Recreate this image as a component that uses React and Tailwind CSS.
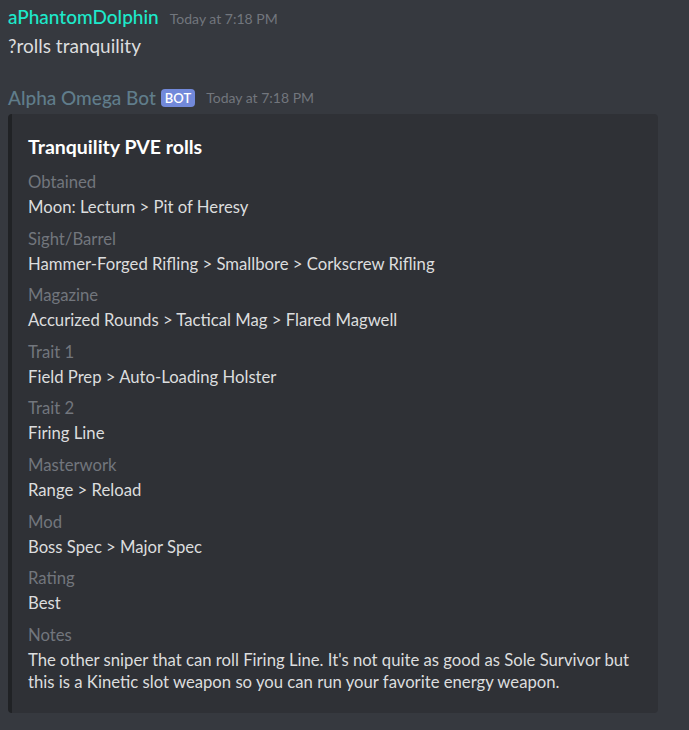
import React from "react";

const fields = [
  ["Obtained", "Moon: Lecturn > Pit of Heresy"],
  ["Sight/Barrel", "Hammer-Forged Rifling > Smallbore > Corkscrew Rifling"],
  ["Magazine", "Accurized Rounds > Tactical Mag > Flared Magwell"],
  ["Trait 1", "Field Prep > Auto-Loading Holster"],
  ["Trait 2", "Firing Line"],
  ["Masterwork", "Range > Reload"],
  ["Mod", "Boss Spec > Major Spec"],
  ["Rating", "Best"],
  [
    "Notes",
    "The other sniper that can roll Firing Line. It's not quite as good as Sole Survivor but this is a Kinetic slot weapon so you can run your favorite energy weapon.",
  ],
];

export default function App() {
  return (
    <div
      className="w-[689px] h-[730px] bg-[#36393f] overflow-hidden"
      style={{ fontFamily: "Lato, 'Open Sans', sans-serif" }}
    >
      <div className="pl-[8px] pt-[6px]">
        <div className="flex items-baseline gap-[11px] leading-[22px]">
          <span className="text-[19px] font-medium text-[#1de9cb]">aPhantomDolphin</span>
          <span className="text-[14px] text-[#72767d]">Today at 7:18 PM</span>
        </div>
        <div className="mt-[5px] text-[19px] leading-[22px] text-[#dcddde]">?rolls tranquility</div>

        <div className="mt-[30px] flex items-center leading-[22px]">
          <span className="text-[19px] font-medium text-[#607d8b]">Alpha Omega Bot</span>
          <span className="ml-[5px] rounded-[4px] bg-[#7289da] px-[4px] text-[13px] font-semibold leading-[18px] text-white">
            BOT
          </span>
          <span className="ml-[11px] text-[14px] text-[#72767d]">Today at 7:18 PM</span>
        </div>

        <div className="mt-[5px] w-[650px] rounded-[4px] border-l-[4px] border-[#202225] bg-[#2f3136] pl-[16px] pr-[16px] pt-[22px] pb-[20px]">
          <div className="text-[19.5px] font-bold leading-[22px] text-white">Tranquility PVE rolls</div>
          <div className="mt-[13px] flex flex-col gap-[9.6px]">
            {fields.map(([label, value]) => (
              <div key={label}>
                <div className="text-[16.7px] leading-[22px] text-[#72767d]">{label}</div>
                <div className="mt-[3px] text-[16.7px] leading-[22px] text-[#dcddde]">{value}</div>
              </div>
            ))}
          </div>
        </div>
      </div>
    </div>
  );
}
